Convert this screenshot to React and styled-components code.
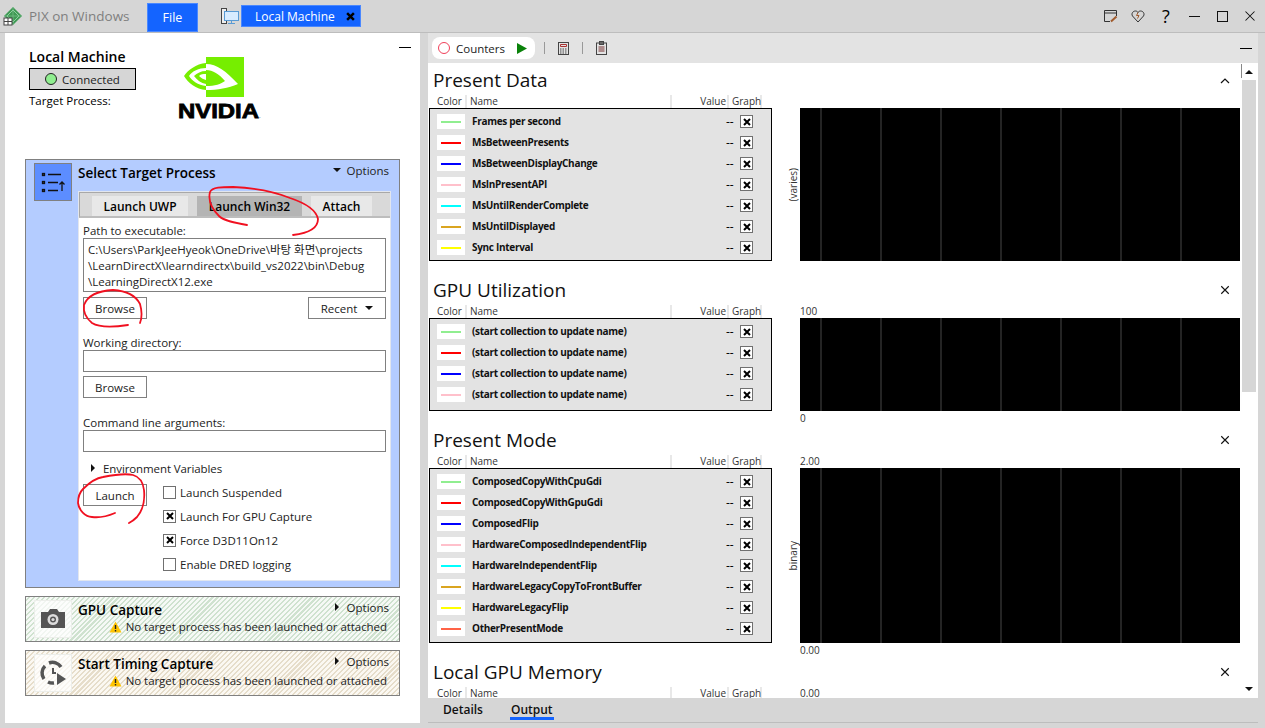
import React from "react";
import styled, { createGlobalStyle, css } from "styled-components";

const GlobalStyle = createGlobalStyle`
  html, body {
    margin: 0;
    padding: 0;
    height: 100%;
    overflow: hidden;
    background: #d6d6d6;
  }
  * {
    box-sizing: border-box;
  }
`;

const Window = styled.div`
  position: relative;
  width: 1265px;
  height: 728px;
  overflow: hidden;
  background: #d6d6d6;
  color: #000;
  font-family: "Open Sans", "Noto Sans CJK KR", sans-serif;
  font-size: 11.5px;
  line-height: 15px;
`;

/* title bar */
const TitleBar = styled.div`
  display: flex;
  align-items: center;
  height: 33px;
  padding: 0 1px 0 3px;
  border-bottom: 1px solid #bdbdbd;
`;

const AppName = styled.span`
  margin: 0 17px 0 6px;
  width: 101px;
  color: #7f7f7f;
  font-size: 13.5px;
  white-space: nowrap;
`;

const FileButton = styled.div`
  display: flex;
  align-items: center;
  justify-content: center;
  width: 51px;
  height: 29px;
  margin-top: 3px;
  background: #1464ff;
  border: 1px solid #4a88ff;
  color: #fff;
  font-size: 12.5px;
`;

const DocTab = styled.div`
  display: flex;
  align-items: center;
  justify-content: space-between;
  width: 120px;
  height: 22px;
  margin-left: 2px;
  padding: 0 5px 0 13px;
  background: #1464ff;
  border: 1px solid #4a88ff;
  color: #fff;
  font-size: 12px;
  white-space: nowrap;
`;

const MonitorSlot = styled.div`
  display: flex;
  margin-left: 23px;
`;

const WindowIcons = styled.div`
  display: flex;
  align-items: center;
  margin-left: auto;
`;

const IconSlot = styled.div`
  display: flex;
  align-items: center;
  justify-content: center;
  width: 28px;
  height: 20px;
  font-size: 18px;
`;

/* main area */
const Main = styled.div`
  display: flex;
  height: 690px;
  padding: 0 7px 0 5px;
`;

const LeftPane = styled.div`
  width: 415px;
  padding: 0 20px;
  background: #fff;
`;

const MachineHeader = styled.div`
  display: flex;
  align-items: flex-start;
  height: 126px;
  padding: 14px 0 0 4px;
  margin-right: -11px;
`;

const MachineInfo = styled.div`
  display: flex;
  flex-direction: column;
  width: 107px;
`;

const MachineName = styled.div`
  font-size: 14px;
  font-weight: 600;
  line-height: 20px;
  white-space: nowrap;
`;

const Status = styled.div`
  display: flex;
  align-items: center;
  justify-content: center;
  gap: 5px;
  height: 22px;
  margin-top: 1px;
  background: #d6d6d6;
  border: 1px solid #000;
  color: #222;
`;

const StatusDot = styled.span`
  width: 12px;
  height: 12px;
  border-radius: 50%;
  background: #90ee90;
  border: 1px solid #222;
`;

const TargetLabel = styled.div`
  margin-top: 3px;
  white-space: nowrap;
`;

const LogoSlot = styled.div`
  margin: 10px 0 0 42px;
  height: 62px;
`;

const MinimizeBar = styled.div`
  width: 12px;
  height: 1px;
  background: #000;
  margin-left: auto;
`;

const tones = {
  active: css`
    background: #b4ccff;
  `,
  green: css`
    background: repeating-linear-gradient(135deg, #f6f9f6 0 2px, #cfe2cf 2px 3.5px);
  `,
  tan: css`
    background: repeating-linear-gradient(135deg, #fbf8f2 0 2px, #e6ddca 2px 3.5px);
  `,
};

const Panel = styled.section`
  display: grid;
  grid-template-columns: 38px 1fr;
  column-gap: 6px;
  margin-bottom: 8px;
  padding: ${p => (p.$collapsed ? "3px 8px 3px" : "3px 8px 6px")};
  border: 1px solid #808080;
  ${p => tones[p.$tone]}
`;

const PanelIcon = styled.div`
  display: flex;
  align-items: center;
  justify-content: center;
  grid-row: 1 / span 2;
  align-self: start;
  width: 38px;
  height: 38px;
  border: 1px solid ${p => (p.$active ? "#808080" : "#eceeea")};
  background: ${p => (p.$active ? "#5c8dff" : "rgba(255, 255, 255, 0.7)")};
`;

const PanelHead = styled.div`
  display: flex;
  flex-direction: column;
  min-width: 0;
`;

const PanelTitleRow = styled.div`
  display: flex;
  justify-content: space-between;
  height: ${p => (p.$collapsed ? "18px" : "28px")};
  padding: 1px 2px 0 0;
`;

const PanelTitle = styled.div`
  font-size: 13.5px;
  font-weight: 600;
  line-height: 18px;
  white-space: nowrap;
`;

const Options = styled.div`
  display: flex;
  align-items: center;
  gap: 6px;
  height: 16px;
  margin-top: -2px;
  color: #222;
`;

const Warning = styled.div`
  display: flex;
  align-items: center;
  justify-content: flex-end;
  gap: 4px;
  margin-top: 1px;
  padding-right: 4px;
  color: #222;
  letter-spacing: -0.06px;
  white-space: nowrap;
`;

const Card = styled.div`
  grid-column: 2;
  grid-row: 2;
  padding-bottom: 4px;
  background: #fff;
  border: 1px solid #e2e6ee;
`;

const TabStrip = styled.div`
  display: flex;
  gap: 9px;
  height: 26px;
  padding: 3px 0 0 12px;
  background: #d9d9d9;
  border-style: solid;
  border-width: 1px 0 2px 1px;
  border-color: #a8a8a8 #a8a8a8 #bdbdbd #a8a8a8;
`;

const Tab = styled.div`
  display: flex;
  align-items: center;
  justify-content: center;
  width: ${p => p.$w}px;
  height: 20px;
  background: ${p => (p.$selected ? "#b4b4b4" : "#e8e8e8")};
  font-size: 12px;
  font-weight: 600;
`;

const Form = styled.div`
  padding: 0 4px;
`;

const Label = styled.div`
  margin-top: ${p => p.$top}px;
  height: 15px;
  color: #222;
  white-space: nowrap;
`;

const PathBox = styled.div`
  height: 54px;
  padding: 3px 0 0 4px;
  border: 1px solid #808080;
  line-height: 16px;
  color: #222;
`;

const Input = styled.div`
  height: 22px;
  border: 1px solid #808080;
`;

const ButtonRow = styled.div`
  display: flex;
  justify-content: space-between;
  margin-top: ${p => p.$top}px;
`;

const Button = styled.div`
  display: flex;
  align-items: center;
  justify-content: center;
  gap: 8px;
  width: ${p => p.$w || 64}px;
  height: 22px;
  border: 1px solid #808080;
  color: #222;
`;

const Disclosure = styled.div`
  display: flex;
  align-items: center;
  gap: 6px;
  height: 16px;
  margin-top: 8px;
  padding-left: 6px;
  color: #222;
  letter-spacing: -0.1px;
`;

const LaunchRow = styled.div`
  display: flex;
  align-items: flex-start;
  gap: 16px;
  margin-top: 4px;
`;

const LaunchButton = styled(Button)`
  margin-top: 4px;
`;

const CheckList = styled.div`
  display: flex;
  flex-direction: column;
`;

const CheckRow = styled.div`
  display: flex;
  align-items: center;
  gap: 4px;
  height: 24px;
  color: #222;
  white-space: nowrap;
`;

const Box = styled.span`
  display: flex;
  align-items: center;
  justify-content: center;
  flex: none;
  width: 13px;
  height: 13px;
  background: #fff;
  border: 1px solid #707070;
`;

/* right pane */
const RightPane = styled.div`
  display: flex;
  flex-direction: column;
  width: 830px;
  margin-left: 8px;
  height: 690px;
`;

const Toolbar = styled.div`
  display: flex;
  align-items: center;
  flex: none;
  height: 30px;
  padding: 0 6px 0 4px;
  background: #e3e3e3;
`;

const CounterPill = styled.div`
  display: flex;
  align-items: center;
  width: 103px;
  height: 22px;
  padding-left: 6px;
  background: #fff;
  border-radius: 8px;
  color: #222;
`;

const RecordDot = styled.span`
  width: 12px;
  height: 12px;
  margin-right: 6px;
  border-radius: 50%;
  border: 1px solid #f0405a;
`;

const CounterName = styled.span`
  width: 61px;
`;

const ToolSep = styled.span`
  width: 1px;
  height: 12px;
  margin: 0 13px 0 ${p => p.$left || 13}px;
  background: #999;
`;

const Content = styled.div`
  display: flex;
  flex: none;
  height: 635px;
  overflow: hidden;
  background: #fff;
`;

const Sections = styled.div`
  flex: 1;
  padding: 5px 0 0 1px;
  min-width: 0;
`;

const Section = styled.section`
  margin-bottom: 3px;
`;

const SectionTitleRow = styled.div`
  display: flex;
  justify-content: space-between;
  height: 27px;
  padding: 0 11px 0 4px;
`;

const SectionTitle = styled.h2`
  margin: 0;
  font-size: 19px;
  font-weight: 400;
  line-height: 24px;
  color: #111;
`;

const CloseSlot = styled.div`
  display: flex;
  align-items: center;
  height: 24px;
`;

const SectionBody = styled.div`
  display: grid;
  grid-template-columns: 343px 28px 440px;
  grid-template-rows: 13px auto 14px;
`;

const HeadRow = styled.div`
  display: grid;
  grid-template-columns: 38px 205px 57px 33px;
  font-size: 10px;
  line-height: 13px;
  color: #333;
`;

const HeadCell = styled.div`
  padding: ${p => p.$pad || "0 0 0 3px"};
  text-align: ${p => p.$align || "left"};
  border-right: 2px solid #e8e8e8;
  white-space: nowrap;
  &:first-child {
    padding-left: 8px;
  }
`;

const Table = styled.div`
  grid-column: 1;
  grid-row: 2;
  padding: 2px 0;
  min-height: ${p => p.$min || 0}px;
  background: #e3e3e3;
  border: 1px solid #000;
`;

const Row = styled.div`
  display: grid;
  grid-template-columns: 28px 1fr 14px 13px;
  align-items: center;
  height: 21px;
  padding: 0 18px 0 7px;
`;

const Swatch = styled.div`
  display: flex;
  align-items: center;
  justify-content: center;
  height: 15px;
  background: #fff;
  &::after {
    content: "";
    width: 20px;
    height: 2px;
    background: ${p => p.$color};
  }
`;

const RowName = styled.div`
  padding-left: 7px;
  font-size: 10px;
  font-weight: 700;
  letter-spacing: -0.3px;
  white-space: nowrap;
  color: #111;
`;

const RowValue = styled.div`
  margin-right: 9px;
  font-size: 12px;
  text-align: right;
  white-space: nowrap;
`;

const AxisText = styled.div`
  grid-column: 3;
  grid-row: ${p => p.$row};
  font-size: 10px;
  line-height: ${p => (p.$row === 1 ? "13px" : "14px")};
  color: #333;
`;

const YLabel = styled.div`
  grid-column: 2;
  grid-row: 2;
  justify-self: end;
  align-self: center;
  margin-right: 1px;
  writing-mode: vertical-rl;
  transform: rotate(180deg);
  font-size: 10px;
  line-height: 12px;
  color: #333;
`;

const Chart = styled.div`
  grid-column: 3;
  grid-row: 2;
  background-color: #000;
  background-image: linear-gradient(90deg, #242424 0 2px, #000 2px 60px);
  background-size: 60px 100%;
  background-position: 20px 0;
`;

const ScrollBar = styled.div`
  position: relative;
  flex: none;
  width: 17px;
  padding: 17px 2px 0 1px;
  &::before {
    content: "";
    position: absolute;
    left: 0;
    top: 1px;
    width: 1px;
    height: 14px;
    background: #888;
  }
`;

const ScrollThumb = styled.div`
  height: 312px;
  background: #d6d6d6;
`;

const ScrollArrow = styled.span`
  position: absolute;
  left: 4px;
  ${p => (p.$down ? "bottom: 7px;" : "top: 7px;")}
  width: 0;
  height: 0;
  border-left: 4px solid transparent;
  border-right: 4px solid transparent;
  ${p => (p.$down ? "border-top: 4px solid #111;" : "border-bottom: 4px solid #111;")}
`;

const BottomTabs = styled.div`
  display: flex;
  flex: none;
  height: 25px;
  padding-left: 15px;
  border-bottom: 1px solid #bdbdbd;
`;

const BottomTab = styled.div`
  height: 22px;
  margin-right: 27px;
  padding: 4px 0 0;
  font-size: 12px;
  font-weight: 600;
  color: #111;
  ${p =>
    p.$selected &&
    css`
      border-bottom: 3px solid #1464ff;
      padding: 4px 1px 0;
    `}
`;

const Scribbles = styled.svg`
  position: absolute;
  left: 0;
  top: 0;
  pointer-events: none;
`;

const PixIcon = () => (
  <svg width="20" height="20" viewBox="0 0 20 20">
    <path d="M10 1 L19 10 L10 19 L1 10 Z" fill="#3f9a55" />
    <path d="M10 4 L16 10 L10 16 L4 10 Z" fill="none" stroke="#8fd0a0" strokeWidth="1" />
    <path d="M10 1 V19 M1 10 H19" stroke="#7cc08e" strokeWidth="0.7" />
    <rect x="1" y="12" width="8" height="7" fill="#fff" stroke="#444" />
    <path d="M1 15.5 H9 M5 12 V19" stroke="#444" />
  </svg>
);

const MonitorIcon = () => (
  <svg width="18" height="17" viewBox="0 0 18 17">
    <rect x="0.5" y="0.5" width="5" height="15" fill="#eee" stroke="#444" />
    <rect x="3.5" y="3.5" width="14" height="9" fill="#d8ecff" stroke="#5a9bd4" />
    <path d="M10.5 12.5 V15 M7 15.5 H14" stroke="#5a9bd4" />
  </svg>
);

const XMark = ({ size = 8, width = 2, color = "#000" }) => (
  <svg width={size} height={size} viewBox="0 0 8 8">
    <path d="M1 1 L7 7 M7 1 L1 7" stroke={color} strokeWidth={width} fill="none" />
  </svg>
);

const Caret = ({ dir }) => (
  <svg width="8" height="8" viewBox="0 0 8 8">
    <path d={dir === "down" ? "M0 2 H8 L4 6 Z" : "M2 0 L6 4 L2 8 Z"} fill="#111" />
  </svg>
);

const NvidiaLogo = () => (
  <svg width="90" height="68" viewBox="0 0 90 68">
    <rect x="28" y="0" width="38" height="40" fill="#76ee00" />
    <path d="M28 7 C39 7 48 14 60 27 C50 31 40 33 28 33 V29 C37 29 43 27 47 24 C41 17 35 13 28 13 Z" fill="#fff" />
    <path d="M28 6 C18 7 10 13 6 19 C10 26 18 32 28 33 V29 C20 28 14 24 11 19 C14 14 21 11 28 11 Z" fill="#76ee00" />
    <path d="M28 14 C23 14 19 16 16 19 C19 23 23 26 28 27 V23 C25 22 23 21 21 19 C23 17 25 17 28 17 Z" fill="#76ee00" />
    <text x="0" y="61" fontFamily="Liberation Sans" fontWeight="700" fontSize="20" textLength="81" lengthAdjust="spacingAndGlyphs" stroke="#000" strokeWidth="0.8">
      NVIDIA
    </text>
    <text x="81" y="61" fontFamily="Liberation Sans" fontSize="6">.</text>
  </svg>
);

const TargetIcon = () => (
  <svg width="26" height="26" viewBox="0 0 26 26" fill="none" stroke="#111" strokeWidth="1.3">
    <rect x="2.5" y="4.5" width="2" height="2" />
    <rect x="2.5" y="12.5" width="2" height="2" />
    <rect x="2.5" y="20.5" width="2" height="2" />
    <path d="M8 5.5 H21 M8 13.5 H18 M8 21.5 H18 M22 22 V13 M19.5 15.5 L22 13 L24.5 15.5" />
  </svg>
);

const CameraIcon = () => (
  <svg width="26" height="22" viewBox="0 0 26 22">
    <path d="M1 4 H8 L10 1 H17 L19 4 H25 V20 H1 Z" fill="#555" />
    <circle cx="13" cy="11.5" r="5.5" fill="#ddd" />
    <circle cx="13" cy="11.5" r="3" fill="#555" />
    <circle cx="13" cy="11.5" r="1.6" fill="#ddd" />
  </svg>
);

const TimingIcon = () => (
  <svg width="28" height="28" viewBox="0 0 28 28" fill="none">
    <path d="M5 20 A10 10 0 0 1 6 7" stroke="#555" strokeWidth="3.5" />
    <path d="M10 4 A10 10 0 0 1 22 8" stroke="#555" strokeWidth="3.5" />
    <path d="M9 23 A10 10 0 0 0 15 24" stroke="#555" strokeWidth="3.5" />
    <path d="M14 9 V14 H17" stroke="#555" strokeWidth="2" />
    <path d="M18 14 L27 20 L18 26 Z" fill="#555" />
  </svg>
);

const WarningIcon = () => (
  <svg width="13" height="12" viewBox="0 0 13 12">
    <path d="M6.5 0.5 L12.5 11.5 H0.5 Z" fill="#ffc400" />
    <path d="M6.5 4 V8 M6.5 9 V10.5" stroke="#222" strokeWidth="1.4" />
  </svg>
);

const presentData = [
  ["Frames per second", "#90ee90"],
  ["MsBetweenPresents", "#ff0000"],
  ["MsBetweenDisplayChange", "#0000ff"],
  ["MsInPresentAPI", "#ffc0cb"],
  ["MsUntilRenderComplete", "#00ffff"],
  ["MsUntilDisplayed", "#daa520"],
  ["Sync Interval", "#ffff00"],
];

const gpuUtil = [
  ["(start collection to update name)", "#90ee90"],
  ["(start collection to update name)", "#ff0000"],
  ["(start collection to update name)", "#0000ff"],
  ["(start collection to update name)", "#ffc0cb"],
];

const presentMode = [
  ["ComposedCopyWithCpuGdi", "#90ee90"],
  ["ComposedCopyWithGpuGdi", "#ff0000"],
  ["ComposedFlip", "#0000ff"],
  ["HardwareComposedIndependentFlip", "#ffc0cb"],
  ["HardwareIndependentFlip", "#00ffff"],
  ["HardwareLegacyCopyToFrontBuffer", "#daa520"],
  ["HardwareLegacyFlip", "#ffff00"],
  ["OtherPresentMode", "#ff6347"],
];

function CounterSection({ title, rows, top, bottom, yLabel, min, caret }) {
  return (
    <Section>
      <SectionTitleRow>
        <SectionTitle>{title}</SectionTitle>
        <CloseSlot>
          {caret ? (
            <svg width="10" height="7" viewBox="0 0 10 7">
              <path d="M1 6 L5 2 L9 6" stroke="#111" strokeWidth="1.2" fill="none" />
            </svg>
          ) : (
            <XMark size={10} width={0.9} color="#111" />
          )}
        </CloseSlot>
      </SectionTitleRow>
      <SectionBody>
        <HeadRow>
          <HeadCell>Color</HeadCell>
          <HeadCell>Name</HeadCell>
          <HeadCell $align="right" $pad="0 1px 0 0">Value</HeadCell>
          <HeadCell $pad="0 0 0 3px">Graph</HeadCell>
        </HeadRow>
        <AxisText $row={1}>{top}</AxisText>
        <Table $min={min}>
          {rows.map(([name, color], i) => (
            <Row key={i}>
              <Swatch $color={color} />
              <RowName>{name}</RowName>
              <RowValue>--</RowValue>
              <Box><XMark /></Box>
            </Row>
          ))}
        </Table>
        {yLabel && <YLabel>{yLabel}</YLabel>}
        <Chart />
        <AxisText $row={3}>{bottom}</AxisText>
      </SectionBody>
    </Section>
  );
}

function App() {
  return (
    <Window>
      <GlobalStyle />
      <TitleBar>
        <PixIcon />
        <AppName>PIX on Windows</AppName>
        <FileButton>File</FileButton>
        <MonitorSlot><MonitorIcon /></MonitorSlot>
        <DocTab>
          Local Machine
          <XMark size={9} width={2.2} />
        </DocTab>
        <WindowIcons>
          <IconSlot>
            <svg width="15" height="14" viewBox="0 0 15 14" fill="none" stroke="#333">
              <path d="M1.5 12.5 V1.5 H13.5 V7 M1.5 4 H13.5 M1.5 12.5 H7" />
              <path d="M8 12.5 L13.5 7.5" stroke="#a05a2c" strokeWidth="2" />
            </svg>
          </IconSlot>
          <IconSlot>
            <svg width="14" height="13" viewBox="0 0 14 13" fill="none" stroke="#333">
              <path d="M7 12 L1.5 6 C0 3.5 2 1 4.5 1 C5.5 1 6.5 1.5 7 2.5 C7.5 1.5 8.5 1 9.5 1 C12 1 14 3.5 12.5 6 Z" />
              <path d="M7 2.5 L5.5 5.5 H8 L6.5 8.5" stroke="#a05a2c" />
            </svg>
          </IconSlot>
          <IconSlot>?</IconSlot>
          <IconSlot>
            <svg width="11" height="1"><rect width="11" height="1" fill="#111" /></svg>
          </IconSlot>
          <IconSlot>
            <svg width="11" height="11"><rect x="0.5" y="0.5" width="10" height="10" fill="none" stroke="#111" /></svg>
          </IconSlot>
          <IconSlot>
            <XMark size={12} width={0.7} color="#111" />
          </IconSlot>
        </WindowIcons>
      </TitleBar>

      <Main>
        <LeftPane>
          <MachineHeader>
            <MachineInfo>
              <MachineName>Local Machine</MachineName>
              <Status>
                <StatusDot />
                Connected
              </Status>
              <TargetLabel>Target Process:</TargetLabel>
            </MachineInfo>
            <LogoSlot><NvidiaLogo /></LogoSlot>
            <MinimizeBar />
          </MachineHeader>

          <Panel $tone="active">
            <PanelIcon $active><TargetIcon /></PanelIcon>
            <PanelHead>
              <PanelTitleRow>
                <PanelTitle>Select Target Process</PanelTitle>
                <Options><Caret dir="down" />Options</Options>
              </PanelTitleRow>
            </PanelHead>
            <Card>
              <TabStrip>
                <Tab $w={96}>Launch UWP</Tab>
                <Tab $w={105} $selected>Launch Win32</Tab>
                <Tab $w={61}>Attach</Tab>
              </TabStrip>
              <Form>
                <Label $top={5}>Path to executable:</Label>
                <PathBox>
                  C:\Users\ParkJeeHyeok\OneDrive\바탕 화면\projects
                  <br />
                  \LearnDirectX\learndirectx\build_vs2022\bin\Debug
                  <br />
                  \LearningDirectX12.exe
                </PathBox>
                <ButtonRow $top={5}>
                  <Button>Browse</Button>
                  <Button $w={78}>Recent <Caret dir="down" /></Button>
                </ButtonRow>
                <Label $top={16}>Working directory:</Label>
                <Input />
                <ButtonRow $top={4}>
                  <Button>Browse</Button>
                </ButtonRow>
                <Label $top={17}>Command line arguments:</Label>
                <Input />
                <Disclosure><Caret dir="right" />Environment Variables</Disclosure>
                <LaunchRow>
                  <LaunchButton>Launch</LaunchButton>
                  <CheckList>
                    <CheckRow><Box />Launch Suspended</CheckRow>
                    <CheckRow><Box><XMark /></Box>Launch For GPU Capture</CheckRow>
                    <CheckRow><Box><XMark /></Box>Force D3D11On12</CheckRow>
                    <CheckRow><Box />Enable DRED logging</CheckRow>
                  </CheckList>
                </LaunchRow>
              </Form>
            </Card>
          </Panel>

          <Panel $tone="green" $collapsed>
            <PanelIcon><CameraIcon /></PanelIcon>
            <PanelHead>
              <PanelTitleRow $collapsed>
                <PanelTitle>GPU Capture</PanelTitle>
                <Options><Caret dir="right" />Options</Options>
              </PanelTitleRow>
              <Warning><WarningIcon />No target process has been launched or attached</Warning>
            </PanelHead>
          </Panel>

          <Panel $tone="tan" $collapsed>
            <PanelIcon><TimingIcon /></PanelIcon>
            <PanelHead>
              <PanelTitleRow $collapsed>
                <PanelTitle>Start Timing Capture</PanelTitle>
                <Options><Caret dir="right" />Options</Options>
              </PanelTitleRow>
              <Warning><WarningIcon />No target process has been launched or attached</Warning>
            </PanelHead>
          </Panel>
        </LeftPane>

        <RightPane>
          <Toolbar>
            <CounterPill>
              <RecordDot />
              <CounterName>Counters</CounterName>
              <svg width="10" height="11" viewBox="0 0 10 11"><path d="M0 0 L10 5.5 L0 11 Z" fill="#0a820a" /></svg>
            </CounterPill>
            <ToolSep $left={9} />
            <svg width="11" height="13" viewBox="0 0 11 13" fill="none" stroke="#444">
              <rect x="0.5" y="0.5" width="10" height="12" />
              <path d="M2.5 2.5 H8.5 V4.5 H2.5 Z" stroke="#a33" />
              <path d="M2 7 H9 M2 9 H9 M2 11 H9" strokeDasharray="1.5 1" />
            </svg>
            <ToolSep />
            <svg width="11" height="14" viewBox="0 0 11 14" fill="none" stroke="#444">
              <rect x="0.5" y="2" width="10" height="11.5" />
              <rect x="3.5" y="0.5" width="4" height="3" fill="#666" />
              <path d="M2.5 6 H8.5 M2.5 8 H8.5 M2.5 10 H8.5" stroke="#733" />
            </svg>
            <MinimizeBar />
          </Toolbar>
          <Content>
            <Sections>
              <CounterSection title="Present Data" rows={presentData} yLabel="(varies)" caret />
              <CounterSection title="GPU Utilization" rows={gpuUtil} top="100" bottom="0" min={93} />
              <CounterSection title="Present Mode" rows={presentMode} top="2.00" bottom="0.00" yLabel="binary" min={175} />
              <CounterSection title="Local GPU Memory" rows={[]} top="0.00" />
            </Sections>
            <ScrollBar>
              <ScrollArrow />
              <ScrollThumb />
              <ScrollArrow $down />
            </ScrollBar>
          </Content>
          <BottomTabs>
            <BottomTab>Details</BottomTab>
            <BottomTab $selected>Output</BottomTab>
          </BottomTabs>
        </RightPane>
      </Main>

      <Scribbles width="1265" height="728" viewBox="0 0 1265 728" fill="none" stroke="#f01020" strokeWidth="1.8" strokeLinecap="round">
        <path d="M247 225 C235 223 224 221 219 216 C212 209 208 200 210 192 C212 187 222 187 233 187 C255 188 275 192 290 198 C305 203 316 209 318 219 C318 228 310 233 293 235" />
        <path d="M128 325 C115 327 100 328 92 323 C86 318 83 312 84 305 C87 297 95 291 113 290 C128 291 136 296 140 304 C142 311 142 318 140 323" />
        <path d="M115 513 C108 516 100 518 92 517 C85 517 79 510 78 503 C78 496 80 492 83 489 C90 482 96 478 103 477 C113 475 125 473 133 475 C140 477 143 482 144 490 C145 500 143 510 137 517 C134 520 131 522 129 523" />
      </Scribbles>
    </Window>
  );
}

export default App;
